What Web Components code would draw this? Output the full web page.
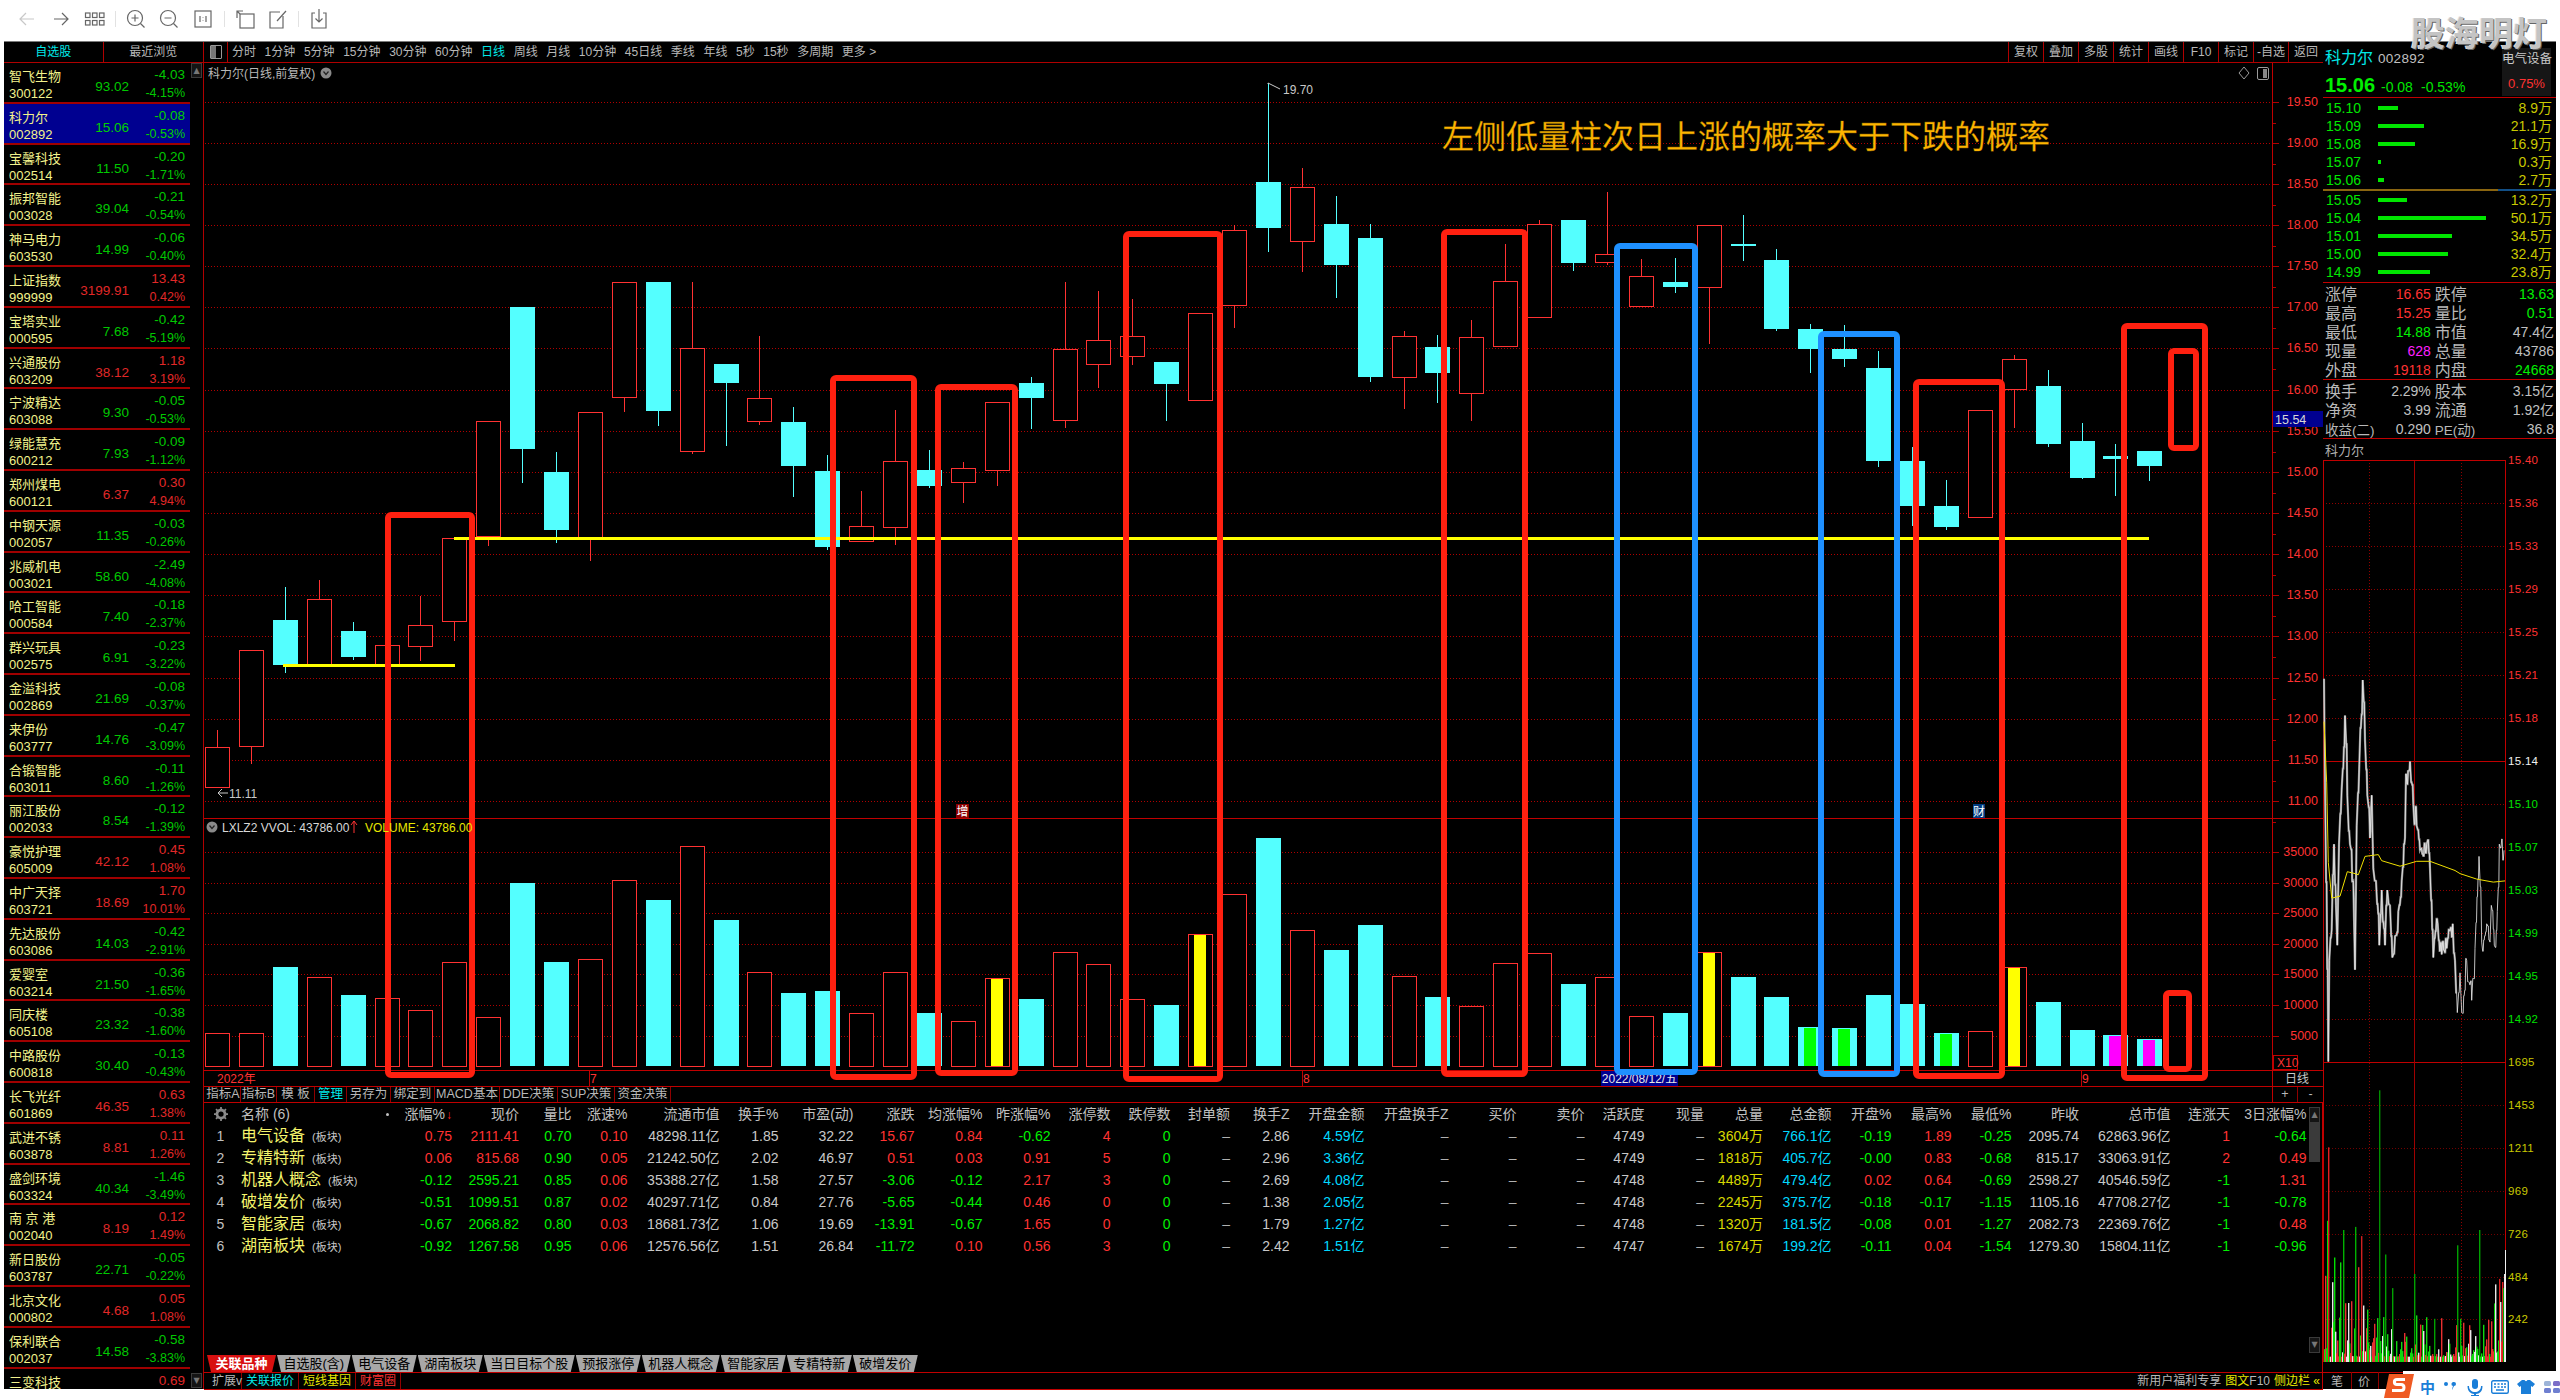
<!DOCTYPE html>
<html lang="zh">
<head>
<meta charset="utf-8">
<title>科力尔</title>
<style>
  html, body{ margin:0; padding:0; background:#fff; }
  body{
    width:2560px;
    height:1400px;
    overflow:hidden;
    position:relative;
    font-family:"Liberation Sans","Noto Sans CJK SC",sans-serif;
    font-size:13px;
  }
  #frame{
    margin:0 4px;
    height:1348px;
    display:flex;
    background:#000;
    border-top:1px solid #7a7a7a;
    box-sizing:border-box;
  }
  #center{
    width:2119px;
    display:flex;
    flex-direction:column;
    flex:none;
  }
</style>
</head>
<body>
<top-toolbar></top-toolbar>
<div id="frame">
  <quote-list></quote-list>
  <div id="center">
    <period-bar></period-bar>
    <kline-chart></kline-chart>
    <tool-tabs></tool-tabs>
    <board-table></board-table>
    <sheet-tabs></sheet-tabs>
    <status-bar></status-bar>
  </div>
  <level-panel></level-panel>
</div>
<water-mark></water-mark>
<ime-bar></ime-bar>

<script>
const RED_LINE = '#b00000';
const UP = '#ff3232';
const DOWN = '#00e600';

class TopToolbar extends HTMLElement{
  constructor(){
    super();
    const s = 'fill="none" stroke="#666" stroke-width="1.2"';
    const icon = (x, body) => `<svg style="left:${x - 11}px" width="22" height="22" viewBox="0 0 22 22" ${s}>${body}</svg>`;
    this.attachShadow({mode:'open'}).innerHTML = `
      <style>
        :host{ display:block; height:41px; position:relative; background:#fff; }
        svg{ position:absolute; top:8px; }
        i{ position:absolute; top:11px; width:1px; height:16px; background:#e2e2e2; }
      </style>
      <svg style="left:16px" width="22" height="22" viewBox="0 0 22 22" fill="none" stroke="#c8c8c8" stroke-width="1.2"><path d="M18 11H4M10 5l-6 6 6 6"/></svg>
      ${icon(61, '<path d="M4 11h14M12 5l6 6-6 6"/>')}
      ${icon(95, '<rect x="1.5" y="5" width="4.5" height="4.5"/><rect x="8.5" y="5" width="4.5" height="4.5"/><rect x="15.5" y="5" width="4.5" height="4.5"/><rect x="1.5" y="12.5" width="4.5" height="4.5"/><rect x="8.5" y="12.5" width="4.5" height="4.5"/><rect x="15.5" y="12.5" width="4.5" height="4.5"/>')}
      <i style="left:115px"></i>
      ${icon(136, '<circle cx="10" cy="10" r="7.5"/><path d="M15.5 15.5l4 4M6.5 10h7M10 6.5v7"/>')}
      ${icon(169, '<circle cx="10" cy="10" r="7.5"/><path d="M15.5 15.5l4 4M6.5 10h7"/>')}
      ${icon(203, '<rect x="3" y="3" width="16" height="16"/><path d="M8 8v6M14 8v6M11 9v.5M11 12.5v.5"/>')}
      <i style="left:224px"></i>
      ${icon(246, '<rect x="5" y="6" width="14" height="14"/><path d="M2 10V3h6M2 3l3 3"/>')}
      ${icon(278, '<path d="M16 8v12H3V4h10"/><path d="M10 13l9-10"/>')}
      <i style="left:298px"></i>
      ${icon(319, '<path d="M7 5H4v15h14V5h-3M11 1v13M7.5 10.5L11 14l3.5-3.5"/>')}
    `;
  }
}
customElements.define('top-toolbar', TopToolbar);

class WaterMark extends HTMLElement{
  constructor(){
    super();
    this.attachShadow({mode:'open'}).innerHTML = `
      <style>
        :host{
          position:absolute; left:2411px; top:10px;
          font:bold 34px/44px "Noto Sans CJK SC",sans-serif;
          color:#c4c4c4;
          text-shadow:1px 1px 0 #666, -1px 0 0 #e6e6e6;
          pointer-events:none;
          white-space:nowrap;
        }
      </style>
      股海明灯
    `;
  }
}
customElements.define('water-mark', WaterMark);

const QUOTES = [
  ['智飞生物','300122','93.02','-4.03','-4.15%'],['科力尔','002892','15.06','-0.08','-0.53%'],
  ['宝馨科技','002514','11.50','-0.20','-1.71%'],['振邦智能','003028','39.04','-0.21','-0.54%'],
  ['神马电力','603530','14.99','-0.06','-0.40%'],['上证指数','999999','3199.91','13.43','0.42%'],
  ['宝塔实业','000595','7.68','-0.42','-5.19%'],['兴通股份','603209','38.12','1.18','3.19%'],
  ['宁波精达','603088','9.30','-0.05','-0.53%'],['绿能慧充','600212','7.93','-0.09','-1.12%'],
  ['郑州煤电','600121','6.37','0.30','4.94%'],['中钢天源','002057','11.35','-0.03','-0.26%'],
  ['兆威机电','003021','58.60','-2.49','-4.08%'],['哈工智能','000584','7.40','-0.18','-2.37%'],
  ['群兴玩具','002575','6.91','-0.23','-3.22%'],['金溢科技','002869','21.69','-0.08','-0.37%'],
  ['来伊份','603777','14.76','-0.47','-3.09%'],['合锻智能','603011','8.60','-0.11','-1.26%'],
  ['丽江股份','002033','8.54','-0.12','-1.39%'],['豪悦护理','605009','42.12','0.45','1.08%'],
  ['中广天择','603721','18.69','1.70','10.01%'],['先达股份','603086','14.03','-0.42','-2.91%'],
  ['爱婴室','603214','21.50','-0.36','-1.65%'],['同庆楼','605108','23.32','-0.38','-1.60%'],
  ['中路股份','600818','30.40','-0.13','-0.43%'],['长飞光纤','601869','46.35','0.63','1.38%'],
  ['武进不锈','603878','8.81','0.11','1.26%'],['盛剑环境','603324','40.34','-1.46','-3.49%'],
  ['南 京 港','002040','8.19','0.12','1.49%'],['新日股份','603787','22.71','-0.05','-0.22%'],
  ['北京文化','000802','4.68','0.05','1.08%'],['保利联合','002037','14.58','-0.58','-3.83%'],
  ['三变科技','','','0.69','']
];

class QuoteList extends HTMLElement{
  constructor(){
    super();
    const rows = QUOTES.map((q, i) => {
      const c = q[3][0] === '-' ? 'dn' : 'up';
      return `<div class="row ${i === 1 ? 'sel' : ''} ${c}">
        <div class="name"><b>${q[0]}</b><b>${q[1]}</b></div>
        <div class="price">${q[2]}</div>
        <div class="chg"><span>${q[3]}</span><span>${q[4]}</span></div>
      </div>`;
    }).join('');
    this.attachShadow({mode:'open'}).innerHTML = `
      <style>
        :host{
          display:flex; flex-direction:column; flex:none;
          width:200px; box-sizing:border-box;
          border-right:1px solid ${RED_LINE};
          overflow:hidden;
        }
        #tabs{
          display:flex; height:21px; flex:none; box-sizing:border-box;
          border-bottom:1px solid ${RED_LINE};
          font-size:12px; line-height:20px; text-align:center; color:#b8b8b8;
        }
        #tabs div{ width:100px; }
        #tabs div:first-child{ width:99px; color:#00e8e8; border-right:1px solid ${RED_LINE}; }
        #body{ display:flex; flex:1; min-height:0; }
        #rows{ width:186px; flex:none; overflow:hidden; }
        #bar{ flex:1; display:flex; flex-direction:column; justify-content:space-between; padding-bottom:1px; }
        #bar i{ display:block; width:9px; height:13px; margin-left:1px; border:1px solid #3c3c3c; background:#141414; color:#777; font:normal 8px/13px "DejaVu Sans",sans-serif; text-align:center; }
        .row{
          display:grid; grid-template-columns:56px 64px 56px;
          height:40.8px; box-sizing:border-box;
          padding:0 5px; border-bottom:2px solid #a00000;
        }
        .row.sel{ background:#000090; border-top:0; }
        .name{ padding-top:5px; white-space:nowrap; color:#f2f28c; }
        .name b{ display:block; font-weight:normal; line-height:17px; font-size:13px; }
        .price{ text-align:right; padding-top:15px; line-height:18px; font-size:13.5px; }
        .chg{ text-align:right; padding-top:3px; white-space:nowrap; }
        .chg span{ display:block; line-height:18px; font-size:13.5px; }
        .chg span + span{ font-size:12.5px; }
        .up .price, .up .chg{ color:#e02828; }
        .dn .price, .dn .chg{ color:#00c800; }
        .sel .price, .sel .chg{ color:#00d000; }
      </style>
      <div id="tabs"><div>自选股</div><div>最近浏览</div></div>
      <div id="body">
        <div id="rows">${rows}</div>
        <div id="bar"><i>▲</i><i>▼</i></div>
      </div>
    `;
  }
}
customElements.define('quote-list', QuoteList);

class PeriodBar extends HTMLElement{
  constructor(){
    super();
    const left = ['分时','1分钟','5分钟','15分钟','30分钟','60分钟','日线','周线','月线','10分钟','45日线','季线','年线','5秒','15秒','多周期','更多 &gt;'];
    const right = ['复权','叠加','多股','统计','画线','F10','标记','-自选','返回'];
    this.attachShadow({mode:'open'}).innerHTML = `
      <style>
        :host{
          display:flex; height:21px; flex:none; box-sizing:border-box;
          border-bottom:1px solid ${RED_LINE};
          color:#b8b8b8; font-size:12px; line-height:20px; white-space:nowrap;
        }
        #book{ width:23px; flex:none; border-right:1px solid ${RED_LINE}; display:flex; align-items:center; justify-content:center; }
        #book i{ width:10px; height:12px; border:1px solid #999; background:linear-gradient(90deg,#777 45%,#000 45%); border-radius:1px; }
        #left{ display:flex; gap:8.6px; padding-left:4px; flex:1; }
        #left .on{ color:#00e8e8; }
        #right{ display:flex; }
        #right div{ width:35px; box-sizing:border-box; text-align:center; border-left:1px solid ${RED_LINE}; }
      </style>
      <div id="book"><i></i></div>
      <div id="left">${left.map(t => `<span class="${t === '日线' ? 'on' : ''}">${t}</span>`).join('')}</div>
      <div id="right">${right.map(t => `<div>${t}</div>`).join('')}</div>
    `;
  }
}
customElements.define('period-bar', PeriodBar);

// body top, body bottom, wick top, wick bottom, 1 = red hollow, 0 = cyan solid
const CANDLES = [
  [747,787,730,787,1],[650,746,650,764,1],[620,665,587,673,0],[599,665,580,665,1],[631,657,622,660,0],
  [645,665,645,665,1],[625,646,596,661,1],[538,621,538,641,1],[421,536,421,546,1],[307,449,307,483,0],
  [472,530,452,543,0],[412,537,412,561,1],[282,397,282,412,1],[282,411,282,426,0],[348,451,282,454,1],
  [364,383,364,446,0],[398,421,336,425,1],[422,466,407,497,0],[471,547,455,550,0],[526,541,491,542,1],
  [461,527,410,545,1],[470,486,450,488,0],[468,482,462,503,1],[402,470,402,486,1],[383,398,377,429,0],
  [349,420,282,428,1],[340,364,291,388,1],[336,356,299,365,1],[362,384,362,421,0],[313,400,313,400,1],
  [230,305,225,328,1],[182,228,83,252,0],[187,241,168,272,1],[224,265,196,298,0],[238,377,224,382,0],
  [336,377,331,409,1],[347,373,335,403,0],[337,393,320,421,1],[281,346,244,346,1],[224,317,220,317,1],
  [220,263,220,271,0],[254,262,192,265,1],[276,306,259,306,1],[282,287,258,293,0],[225,287,225,344,1],
  [244,246,215,261,0],[260,329,249,331,0],[329,349,324,373,0],[349,359,325,367,0],[368,461,351,467,0],
  [461,506,447,526,0],[506,527,480,530,0],[410,517,410,517,1],[359,389,355,428,1],[386,444,370,447,0],
  [441,478,423,479,0],[456,459,444,496,0],[451,466,451,481,0]
];
// bar top y, kind: r hollow, c cyan, then optional inner colour
const VOLS = [
  [1033,'r'],[1033,'r'],[967,'c'],[977,'r'],[995,'c'],[998,'r'],[1010,'r'],[962,'r'],[1017,'r'],[883,'c'],
  [962,'c'],[959,'r'],[880,'r'],[900,'c'],[846,'r'],[920,'c'],[972,'r'],[993,'c'],[991,'c'],[1013,'r'],
  [972,'r'],[1013,'c'],[1021,'r'],[978,'r','#ffff00'],[999,'c'],[952,'r'],[964,'r'],[999,'r'],[1005,'c'],[934,'r','#ffff00'],
  [894,'r'],[838,'c'],[930,'r'],[950,'c'],[925,'c'],[976,'r'],[997,'c'],[1006,'r'],[963,'r'],[953,'r'],
  [984,'c'],[977,'r'],[1016,'r'],[1013,'c'],[952,'r','#ffff00'],[977,'c'],[997,'c'],[1027,'c','#00ff00'],[1028,'c','#00ff00'],[995,'c'],
  [1004,'c'],[1033,'c','#00ff00'],[1031,'r'],[967,'r','#ffff00'],[1002,'c'],[1030,'c'],[1035,'c','#ff00ff'],[1039,'c','#ff00ff']
];
// outer box left, right, top, bottom, colour
const BOXES = [
  [385,475,512,1078,'#ff2010'],[830,917,375,1080,'#ff2010'],[935,1018,384,1076,'#ff2010'],
  [1123,1223,231,1082,'#ff2010'],[1441,1528,229,1077,'#ff2010'],[1614,1698,243,1075,'#1e90ff'],
  [1818,1900,331,1077,'#1e90ff'],[1913,2005,379,1079,'#ff2010'],[2121,2208,323,1081,'#ff2010'],
  [2168,2199,348,451,'#ff2010'],[2163,2192,990,1072,'#ff2010']
];

class KlineChart extends HTMLElement{
  constructor(){
    super();
    const CYAN = '#54ffff';
    const STEP = 33.9, W = 25, X0 = 205, BASE = 1066;
    const parts = [];
    // grid and axis
    const hline = (y, x2) => `<line x1="205" x2="${x2}" y1="${y}.5" y2="${y}.5" stroke="#b00000" stroke-width="1" stroke-dasharray="1 2"/>`;
    const priceY = p => Math.round(101.5 + (19.5 - p) * 82.3);
    for(let p = 19.5; p >= 11; p -= 0.5){
      const y = priceY(p);
      parts.push(hline(y, 2272));
      parts.push(`<line x1="2272" x2="2279" y1="${y}.5" y2="${y}.5" stroke="${RED_LINE}"/>`);
      parts.push(`<line x1="2272" x2="2276" y1="${y + 21}.5" y2="${y + 21}.5" stroke="${RED_LINE}"/>`);
      parts.push(`<text x="2318" y="${y + 4}" text-anchor="end" fill="${UP}" font-size="12.5">${p.toFixed(2)}</text>`);
    }
    [35000,30000,25000,20000,15000,10000,5000].forEach((v, i) => {
      const y = Math.round(852 + i * 30.6);
      parts.push(hline(y, 2272));
      parts.push(`<line x1="2272" x2="2279" y1="${y}.5" y2="${y}.5" stroke="${RED_LINE}"/>`);
      parts.push(`<text x="2318" y="${y + 4}" text-anchor="end" fill="${UP}" font-size="12.5">${v}</text>`);
    });
    // candles
    CANDLES.forEach((c, i) => {
      const x = Math.round(X0 + STEP * i), mid = x + 12.5;
      if(c[4]){
        if(c[2] < c[0]) parts.push(`<line x1="${mid}" x2="${mid}" y1="${c[2]}" y2="${c[0]}" stroke="${UP}"/>`);
        if(c[3] > c[1]) parts.push(`<line x1="${mid}" x2="${mid}" y1="${c[1]}" y2="${c[3]}" stroke="${UP}"/>`);
        parts.push(`<rect x="${x}.5" y="${c[0]}.5" width="${W - 1}" height="${c[1] - c[0]}" fill="#000" stroke="${UP}"/>`);
      }else{
        parts.push(`<line x1="${mid}" x2="${mid}" y1="${c[2]}" y2="${c[3]}" stroke="${CYAN}"/>`);
        parts.push(`<rect x="${x}" y="${c[0]}" width="${W}" height="${Math.max(c[1] - c[0], 2)}" fill="${CYAN}"/>`);
      }
    });
    // volume bars
    VOLS.forEach((v, i) => {
      const x = Math.round(X0 + STEP * i);
      if(v[1] === 'r'){
        parts.push(`<rect x="${x}.5" y="${v[0]}.5" width="${W - 1}" height="${BASE - v[0]}" fill="#000" stroke="${UP}"/>`);
      }else{
        parts.push(`<rect x="${x}" y="${v[0]}" width="${W}" height="${BASE - v[0]}" fill="${CYAN}"/>`);
      }
      if(v[2]) parts.push(`<rect x="${x + 6}" y="${v[0] + 1}" width="12" height="${BASE - v[0] - 1}" fill="${v[2]}"/>`);
    });
    // frame lines
    parts.push(`<line x1="204" x2="2323" y1="818.5" y2="818.5" stroke="#c00000"/>`);
    parts.push(`<line x1="204" x2="2323" y1="1070.5" y2="1070.5" stroke="#c00000"/>`);
    parts.push(`<line x1="2272.5" x2="2272.5" y1="63" y2="1086" stroke="#c00000"/>`);
    parts.push(`<rect x="2273.5" y="1055.5" width="24" height="14" fill="none" stroke="#c00000"/>`);
    parts.push(`<text x="2277" y="1067" fill="${UP}" font-size="12">X10</text>`);
    parts.push(`<text x="2297" y="1083" text-anchor="middle" fill="#c8c8c8" font-size="12">日线</text>`);
    // dates
    parts.push(`<text x="217" y="1083" fill="${UP}" font-size="12">2022年</text>`);
    [[590,'7'],[1303,'8'],[2082,'9']].forEach(d => {
      parts.push(`<line x1="${d[0] - 1}.5" x2="${d[0] - 1}.5" y1="1071" y2="1086" stroke="#c00000"/><text x="${d[0]}" y="1083" fill="${UP}" font-size="12">${d[1]}</text>`);
    });
    parts.push(`<rect x="1601" y="1071" width="77" height="15" fill="#000090"/><text x="1639.5" y="1083" text-anchor="middle" fill="#e8e8e8" font-size="12">2022/08/12/五</text>`);
    // yellow lines
    parts.push(`<line x1="454" x2="2149" y1="538.5" y2="538.5" stroke="#ffff00" stroke-width="3"/>`);
    parts.push(`<line x1="283" x2="455" y1="665.5" y2="665.5" stroke="#ffff00" stroke-width="3"/>`);
    // annotations
    BOXES.forEach(b => {
      parts.push(`<rect x="${b[0] + 3}" y="${b[2] + 3}" width="${b[1] - b[0] - 6}" height="${b[3] - b[2] - 6}" rx="3" fill="none" stroke="${b[4]}" stroke-width="6"/>`);
    });
    // labels over the plot
    parts.push(`<text x="1442" y="148" font-family="Noto Sans CJK SC" font-size="32" fill="#ffb400" stroke="#7a5a00" stroke-width="0.3">左侧低量柱次日上涨的概率大于下跌的概率</text>`);
    parts.push(`<text x="208" y="78" fill="#b8b8b8" font-size="12">科力尔(日线,前复权)</text>`);
    parts.push(`<circle cx="326" cy="73" r="5.5" fill="#8a8a8a"/><path d="M323.5 71.5l2.5 3 2.500-3" fill="none" stroke="#222" stroke-width="1.2"/>`);
    parts.push(`<path d="M2244 67l5 6-5 6-5-6z" fill="none" stroke="#9a9a9a"/><rect x="2257.5" y="67.5" width="11" height="12" rx="1.5" fill="#000" stroke="#9a9a9a"/><rect x="2263" y="69" width="4" height="9" fill="#888"/>`);
    parts.push(`<path d="M1268 84V83M1268 83l12 6" stroke="#c8c8c8" fill="none"/><text x="1283" y="94" fill="#c8c8c8" font-size="12">19.70</text>`);
    parts.push(`<path d="M228 793h-10M222 789l-4 4 4 4" stroke="#c8c8c8" fill="none"/><text x="229" y="798" fill="#c8c8c8" font-size="12">11.11</text>`);
    parts.push(`<circle cx="212" cy="827" r="5.5" fill="#8a8a8a"/><path d="M209.5 825.5l2.5 3 2.500-3" fill="none" stroke="#222" stroke-width="1.2"/>`);
    parts.push(`<text x="222" y="832" fill="#d8d8d8" font-size="12">LXLZ2 VVOL: 43786.00</text>`);
    parts.push(`<path d="M354 833v-12M351 825l3-4 3 4" stroke="${UP}" fill="none"/>`);
    parts.push(`<text x="365" y="832" fill="#e8e800" font-size="12">VOLUME: 43786.00</text>`);
    parts.push(`<rect x="956" y="804" width="13" height="14" fill="#8c0000"/><text x="956.5" y="815.5" fill="#fff" font-size="12">增</text>`);
    parts.push(`<rect x="1973" y="804" width="12" height="14" fill="#003a80"/><text x="1973" y="815.5" fill="#fff" font-size="12">财</text>`);
    parts.push(`<rect x="2273" y="411" width="50" height="16" fill="#000090"/><text x="2275" y="423.5" fill="#d8d8d8" font-size="12.5">15.54</text>`);

    this.attachShadow({mode:'open'}).innerHTML = `
      <style>
        :host{ display:block; height:1023px; flex:none; }
        svg{ display:block; font-family:"Liberation Sans","Noto Sans CJK SC",sans-serif; }
      </style>
      <svg width="2119" height="1023" viewBox="204 63 2119 1023">${parts.join('')}</svg>
    `;
  }
}
customElements.define('kline-chart', KlineChart);

class ToolTabs extends HTMLElement{
  constructor(){
    super();
    const tabs = [['指标A',35],['指标B',36],['模 板',38],['管理',32,'#00e8e8'],['另存为',44],['绑定到',44],['MACD基本',65],['DDE决策',58],['SUP决策',57],['资金决策',56]];
    this.attachShadow({mode:'open'}).innerHTML = `
      <style>
        :host{
          display:flex; height:17px; flex:none; box-sizing:border-box;
          border-top:1px solid #c00000; border-bottom:1px solid #c00000;
          color:#b8b8b8; font-size:12.5px; line-height:15px; white-space:nowrap; padding-left:2px;
        }
        div{ box-sizing:border-box; text-align:center; border-right:1px solid #900000; }
        #fill{ flex:1; border-right:1px solid #c00000; }
        .pm{ width:25px; }
        .pm:last-child{ border-right:0; }
      </style>
      ${tabs.map(t => `<div style="width:${t[1]}px;${t[2] ? 'color:' + t[2] : ''}">${t[0]}</div>`).join('')}
      <div id="fill"></div>
      <div class="pm">+</div><div class="pm">-</div>
    `;
  }
}
customElements.define('tool-tabs', ToolTabs);

const COLS = [28,168,52,67,52.5,56,92,59,75,61,68,68,60,60,59.5,59.5,75,84,68,68,60,59.5,59,68.5,60,60,60,67.6,91.4,59.5,76.5];
const HEAD = ['','名称 (6)','涨幅%','现价','量比','涨速%','流通市值','换手%','市盈(动)','涨跌','均涨幅%','昨涨幅%','涨停数','跌停数','封单额','换手Z','开盘金额','开盘换手Z','买价','卖价','活跃度','现量','总量','总金额','开盘%','最高%','最低%','昨收','总市值','连涨天','3日涨幅%'];
const BOARD = [
  ['电气设备','0.75','2111.41','0.70','0.10','48298.11','1.85','32.22','15.67','0.84','-0.62','4','2.86','4.59','4749','3604','766.1','-0.19','1.89','-0.25','2095.74','62863.96','1','-0.64'],
  ['专精特新','0.06','815.68','0.90','0.05','21242.50','2.02','46.97','0.51','0.03','0.91','5','2.96','3.36','4749','1818','405.7','-0.00','0.83','-0.68','815.17','33063.91','2','0.49'],
  ['机器人概念','-0.12','2595.21','0.85','0.06','35388.27','1.58','27.57','-3.06','-0.12','2.17','3','2.69','4.08','4748','4489','479.4','0.02','0.64','-0.69','2598.27','40546.59','-1','1.31'],
  ['破增发价','-0.51','1099.51','0.87','0.02','40297.71','0.84','27.76','-5.65','-0.44','0.46','0','1.38','2.05','4748','2245','375.7','-0.18','-0.17','-1.15','1105.16','47708.27','-1','-0.78'],
  ['智能家居','-0.67','2068.82','0.80','0.03','18681.73','1.06','19.69','-13.91','-0.67','1.65','0','1.79','1.27','4748','1320','181.5','-0.08','0.01','-1.27','2082.73','22369.76','-1','0.48'],
  ['湖南板块','-0.92','1267.58','0.95','0.06','12576.56','1.51','26.84','-11.72','0.10','0.56','3','2.42','1.51','4747','1674','199.2','-0.11','0.04','-1.54','1279.30','15804.11','-1','-0.96']
];

class BoardTable extends HTMLElement{
  constructor(){
    super();
    const sign = v => v[0] === '-' ? 'g' : 'r';
    const cell = (v, cls) => `<div class="${cls || 'w'}">${v}</div>`;
    const dash = cell('–', 'd');
    const head = HEAD.map((h, i) => {
      if(i === 0) return `<div class="gear"><svg width="14" height="14" viewBox="0 0 16 16"><circle cx="8" cy="8" r="4.6" fill="none" stroke="#8a8a8a" stroke-width="3.2"/><path d="M8 0v3M8 13v3M0 8h3M13 8h3M2.300 2.300l2 2M11.700 11.700l2 2M13.700 2.300l-2 2M4.300 11.700l-2 2" stroke="#8a8a8a" stroke-width="2"/></svg></div>`;
      if(i === 1) return `<div class="nm hd">${h}<i class="dot"></i></div>`;
      if(i === 2) return `<div>${h}<span class="arrow">↓</span></div>`;
      return `<div>${h}</div>`;
    }).join('');
    const rows = BOARD.map((r, n) => [
      `<div class="no">${n + 1}</div>`,
      `<div class="nm"><b>${r[0]}</b><small>(板块)</small></div>`,
      cell(r[1], sign(r[1])), cell(r[2], sign(r[1])), cell(r[3], 'g'), cell(r[4], 'r'),
      `<div class="w">${r[5]}亿</div>`, cell(r[6]), cell(r[7]),
      cell(r[8], sign(r[8])), cell(r[9], sign(r[9])), cell(r[10], sign(r[10])),
      cell(r[11], 'r'), cell('0', 'g'), dash, cell(r[12]),
      `<div class="c">${r[13]}亿</div>`, dash, dash, dash, cell(r[14]), dash,
      `<div class="y">${r[15]}万</div>`, `<div class="c">${r[16]}亿</div>`,
      cell(r[17], sign(r[17])), cell(r[18], sign(r[18])), cell(r[19], sign(r[19])),
      cell(r[20]), `<div class="w">${r[21]}亿</div>`, cell(r[22], sign(r[22])), cell(r[23], sign(r[23]))
    ].join('')).join('');
    this.attachShadow({mode:'open'}).innerHTML = `
      <style>
        :host{ display:flex; height:252px; flex:none; border-right:1px solid #c00000; box-sizing:border-box; }
        #grid{
          display:grid; width:2102px; flex:none; align-content:start;
          grid-template-columns:${COLS.map(c => c + 'px').join(' ')};
          grid-auto-rows:22px; padding-top:0;
          font-size:14px; line-height:22px; text-align:right; white-space:nowrap; color:#c0c0c0;
        }
        .gear{ display:flex; align-items:center; justify-content:center; padding-left:6px; }
        .no{ text-align:center; padding-left:5px; }
        .nm{ text-align:left; padding-left:9px; position:relative; }
        .nm b{ font-weight:normal; font-size:16px; color:#f4f46c; }
        .nm small{ font-size:11px; margin-left:7px; color:#c8c8c8; }
        .dot{ position:absolute; left:154px; top:10px; width:3px; height:3px; border-radius:50%; background:#c0c0c0; }
        .arrow{ color:#ff2020; font-size:12px; margin-left:1px; }
        .w{ color:#c8c8c8; } .r{ color:${UP}; } .g{ color:#00f000; }
        .c{ color:#00d8ff; } .y{ color:#d8d800; } .d{ color:#b0b0b0; }
        #sb{ flex:1; display:flex; flex-direction:column; padding:4px 2px 2px 3px; }
        #sb i{ display:block; height:14px; background:#141414; border:1px solid #3a3a3a; color:#777; font:normal 8px/14px "DejaVu Sans",sans-serif; text-align:center; }
        #sb u{ display:block; height:39px; background:#3a3a3a; }
        #sb b{ flex:1; }
      </style>
      <div id="grid">${head}${rows}</div>
      <div id="sb"><i>▲</i><u></u><b></b><i>▼</i></div>
    `;
  }
}
customElements.define('board-table', BoardTable);

class SheetTabs extends HTMLElement{
  constructor(){
    super();
    const tabs = ['自选股(含)','电气设备','湖南板块','当日目标个股','预报涨停','机器人概念','智能家居','专精特新','破增发价'];
    this.attachShadow({mode:'open'}).innerHTML = `
      <style>
        :host{ display:flex; height:17px; flex:none; padding-left:3px; font-size:13px; line-height:17px; white-space:nowrap; border-right:1px solid #c00000; box-sizing:border-box; }
        div{
          padding:0 6.5px; color:#000; background:#a8a8a8; margin-right:1px;
          clip-path:polygon(0 0,100% 0,calc(100% - 4px) 100%,4px 100%);
        }
        .on{ background:#d81010; color:#fff; font-weight:bold; padding:0 8.5px; }
      </style>
      <div class="on">关联品种</div>
      ${tabs.map(t => `<div>${t}</div>`).join('')}
    `;
  }
}
customElements.define('sheet-tabs', SheetTabs);

class StatusBar extends HTMLElement{
  constructor(){
    super();
    this.attachShadow({mode:'open'}).innerHTML = `
      <style>
        :host{
          display:flex; height:18px; flex:none; box-sizing:border-box;
          border-top:1px solid #c00000; border-bottom:1px solid #c00000; border-right:1px solid #c00000;
          font-size:12px; line-height:16px; color:#b8b8b8; white-space:nowrap; padding-left:4px;
        }
        div{ padding:0 4px; border-right:1px solid #900000; }
        .fill{ flex:1; border:0; }
        .r{ display:flex; gap:4px; padding:0 2px 0 0; border:0; }
        .r span{ display:block; }
      </style>
      <div style="width:34px;box-sizing:border-box">扩展v</div>
      <div style="color:#00e8e8">关联报价</div>
      <div style="color:#e8e800">短线基因</div>
      <div style="color:${UP}">财富圈</div>
      <div class="fill"></div>
      <div class="r"><span>新用户福利专享</span><span><b style="color:#e8e800;font-weight:normal">图文</b>F10</span><span style="color:#e8e800">侧边栏 «</span></div>
    `;
  }
}
customElements.define('status-bar', StatusBar);

class LevelPanel extends HTMLElement{
  constructor(){
    super();
    const lv = (p, w, v) => `<div class="lv"><span class="p">${p}</span><span class="b"><i style="width:${w}px"></i></span><span class="v">${v}</span></div>`;
    const st = (a, b, bc, c, d, dc) => `<div class="st"><span class="k">${a}</span><span class="n" style="color:${bc}">${b}</span><span class="k k2">${c}</span><span class="n" style="color:${dc}">${d}</span></div>`;
    const W = '#c0c0c0';
    this.attachShadow({mode:'open'}).innerHTML = `
      <style>
        :host{ display:flex; flex-direction:column; width:233px; flex:none; overflow:hidden; white-space:nowrap; }
        #head{ height:56px; box-sizing:border-box; border-bottom:1px solid #c00000; position:relative; display:flex; flex-direction:column; padding-left:2px; }
        #l1{ display:flex; align-items:baseline; height:32px; line-height:32px; }
        #l1 b{ font-weight:normal; font-size:16px; color:#00e8e8; width:53px; }
        #l1 span{ font-size:13.5px; color:#c0c0c0; letter-spacing:.3px; }
        #l2{ display:flex; align-items:baseline; line-height:22px; color:${DOWN}; font-size:14px; }
        #l2 b{ font-size:20px; width:56px; color:#00f000; }
        #l2 span{ width:40px; }
        #tag{ position:absolute; left:179px; top:6px; width:49px; height:48px; background:#161616; text-align:center; color:#c8c8c8; font-size:12.5px; line-height:22px; }
        #tag em{ display:block; font-style:normal; color:#ff3232; font-size:13px; margin-top:3px; }
        .lv{ display:flex; height:18px; line-height:18px; padding-left:3px; padding-right:4px; }
        .p{ width:52px; color:#00e600; font-size:14px; }
        .b{ flex:1; display:flex; align-items:center; }
        .b i{ display:block; height:4px; background:#00e600; }
        .v{ color:#c8c800; font-size:14px; }
        #asks{ height:91px; box-sizing:border-box; padding-top:1px; }
        #mid{ height:2px; background:linear-gradient(90deg,#8a6510 175px,#124f86 175px); }
        #bids{ height:92px; box-sizing:border-box; border-bottom:1px solid #c00000; }
        .st{ display:flex; height:19px; line-height:19px; padding:0 2px; }
        .k{ font-size:16px; color:#b8b8b8; width:48px; flex:none; }
        .k.sm{ font-size:13.5px; }
        .k2{ margin-left:4px; }
        .n{ font-size:14px; width:65px; text-align:right; }
        .st .n:last-child{ width:80px; margin-left:auto; }
        #s1{ height:97px; box-sizing:border-box; padding-top:2px; border-bottom:1px solid #c00000; }
        #s2{ height:59px; box-sizing:border-box; padding-top:2px; border-bottom:1px solid #c00000; }
      </style>
      <div id="head">
        <div id="l1"><b>科力尔</b><span>002892</span></div>
        <div id="l2"><b>15.06</b><span>-0.08</span><span>-0.53%</span></div>
        <div id="tag">电气设备<em>0.75%</em></div>
      </div>
      <div id="asks">
        ${lv('15.10',20,'8.9万')}${lv('15.09',46,'21.1万')}${lv('15.08',37,'16.9万')}${lv('15.07',3,'0.3万')}${lv('15.06',5.5,'2.7万')}
      </div>
      <div id="mid"></div>
      <div id="bids">
        ${lv('15.05',29,'13.2万')}${lv('15.04',108,'50.1万')}${lv('15.01',74,'34.5万')}${lv('15.00',70,'32.4万')}${lv('14.99',52,'23.8万')}
      </div>
      <div id="s1">
        ${st('涨停','16.65',UP,'跌停','13.63','#00f000')}
        ${st('最高','15.25',UP,'量比','0.51','#00f000')}
        ${st('最低','14.88','#00f000','市值','47.4亿',W)}
        ${st('现量','628','#ff20ff','总量','43786',W)}
        ${st('外盘','19118',UP,'内盘','24668','#00f000')}
      </div>
      <div id="s2">
        ${st('换手','2.29%',W,'股本','3.15亿',W)}
        ${st('净资','3.99',W,'流通','1.92亿',W)}
        ${st('<span class="k sm">收益(二)</span>','0.290',W,'<span class="k sm">PE(动)</span>','36.8',W)}
      </div>
      <mini-chart></mini-chart>
    `;
  }
}

class MiniChart extends HTMLElement{
  constructor(){
    super();
    let seed = 17;
    const rnd = () => { seed = (seed * 1103515245 + 12345) & 0x7fffffff; return seed / 0x7fffffff; };
    // points read off the reference in crop units: x = 2260 + cx / 3, y = 440 + cy / 1.633
    const tx = p => [2260 + p[0] / 3, 440 + p[1] / 1.633];
    const knots = [[192,390],[195,560],[205,1015],[208,850],[215,800],[222,660],[228,760],[232,825],[237,660],[245,570],[255,450],[262,580],[270,660],[280,720],[285,865],[290,630],[298,530],[308,392],[315,490],[322,580],[330,650],[335,580],[340,700],[348,720],[358,825],[365,735],[375,825],[382,735],[390,760],[397,845],[405,810],[415,770],[425,720],[435,650],[438,545],[450,525],[460,595],[470,630],[480,670],[500,660],[510,700],[520,845],[533,790],[545,840],[560,830],[578,790],[585,850],[592,935],[600,870],[605,935],[620,850],[635,915],[645,830],[657,680],[665,820],[680,790],[690,820],[694,760],[703,825],[712,770],[718,660],[732,670]];
    // stepped zigzag between the knots, the way the tick line looks
    const line = [];
    knots.forEach((k, i) => {
      line.push(k);
      const n = knots[i + 1];
      if(!n) return;
      const steps = Math.floor((n[0] - k[0]) / 3);
      for(let j = 1; j < steps; j++){
        const t = j / steps;
        const y = k[1] + (n[1] - k[1]) * t + (rnd() - 0.5) * 44;
        const x = k[0] + (n[0] - k[0]) * t;
        line.push([x, y], [x + 1.5, y]);
      }
    });
    const fmt = list => list.map(p => tx(p).map(v => v.toFixed(1)).join(',')).join(' ');
    const pts = fmt(line);
    const ptsLeft = fmt(line.filter(p => p[0] < 590));
    const avg = fmt([[192,460],[200,560],[205,690],[215,748],[240,745],[262,705],[285,708],[295,710],[315,680],[355,677],[365,687],[420,696],[470,688],[510,688],[585,703],[600,708],[650,717],[700,722],[735,720]]);

    const g = [];
    const labels = ['15.40','15.36','15.33','15.29','15.25','15.21','15.18','15.14','15.10','15.07','15.03','14.99','14.95','14.92'];
    labels.forEach((t, i) => {
      const y = Math.round(460 + i * 42.97);
      const col = i < 7 ? UP : i === 7 ? '#f0f0f0' : '#00e000';
      if(i) g.push(`<line x1="2323" x2="2505" y1="${y}.5" y2="${y}.5" stroke="${i === 7 ? '#c00000' : '#900000'}" ${i === 7 ? '' : 'stroke-dasharray="1 2"'}/>`);
      g.push(`<text x="2508" y="${y + 4}" fill="${col}" font-size="11.5" letter-spacing=".3">${t}</text>`);
    });
    ['1695','1453','1211','969','726','484','242'].forEach((t, i) => {
      const y = Math.round(1062 + i * 42.9);
      g.push(`<line x1="2323" x2="2505" y1="${y}.5" y2="${y}.5" stroke="${i ? '#700000' : '#c00000'}" ${i ? 'stroke-dasharray="1 2"' : ''}/>`);
      g.push(`<text x="2508" y="${y + 4}" fill="#c8c800" font-size="11.5" letter-spacing=".3">${t}</text>`);
    });
    [2369, 2461].forEach(x => g.push(`<line x1="${x}.5" x2="${x}.5" y1="460" y2="1362" stroke="#900000" stroke-dasharray="1 2"/>`));
    g.push(`<line x1="2414.5" x2="2414.5" y1="460" y2="1362" stroke="#a00000"/>`);

    // volume spikes read off the reference, the rest are low noise bars
    const spikes = {200:[1275,'#00e000'],205:[1155,'#e02020'],222:[1335,'#00e000'],248:[1290,'#00b000'],285:[1285,'#00b000'],303:[1300,'#d02020'],357:[1062,'#009000'],375:[1330,'#00a000'],395:[1385,'#00a000'],463:[1362,'#00a000'],522:[1435,'#00a000'],590:[1315,'#00a000'],600:[1435,'#00c000'],658:[1290,'#00a000'],703:[1410,'#00d000'],718:[1370,'#e02020'],725:[1375,'#e02020'],730:[1385,'#00b000']};
    const bars = [];
    for(let cx = 192; cx <= 733; cx += 3){
      const near = Object.keys(spikes).find(k => Math.abs(k - cx) < 2);
      let top, col;
      const left = cx < 330 ? 1 : cx > 690 ? 0.8 : 0.4;
      if(near){
        top = spikes[near][0]; col = spikes[near][1];
      }else{
        const r = rnd();
        top = 1505 - (8 + Math.pow(rnd(), 3) * 170 * left);
        col = r < 0.4 ? '#e83030' : r < 0.78 ? '#10d810' : '#e8e8e8';
      }
      const xy = tx([cx, top]);
      bars.push(`<rect x="${xy[0].toFixed(1)}" y="${xy[1].toFixed(1)}" width="1.4" height="${(1362 - xy[1]).toFixed(1)}" fill="${col}"/>`);
    }

    this.attachShadow({mode:'open'}).innerHTML = `
      <style>
        :host{ display:block; flex:1; min-height:0; position:relative; }
        svg{ display:block; font-family:"Liberation Sans","Noto Sans CJK SC",sans-serif; }
      </style>
      <svg width="233" height="951" viewBox="2323 439 233 951">
        <text x="2325" y="455" fill="#b0b0b0" font-size="13">科力尔</text>
        ${g.join('')}
        <rect x="2323.5" y="460.5" width="182" height="901" fill="none" stroke="#c00000"/>
        <polyline points="${ptsLeft}" fill="none" stroke="#8c8c8c" stroke-width="2.2"/>
        <polyline points="${pts}" fill="none" stroke="#f0f0f0" stroke-width="0.8"/>
        <polyline points="${avg}" fill="none" stroke="#f0e000" stroke-width="1"/>
        ${bars.join('')}
        <line x1="2505.5" x2="2505.5" y1="1250" y2="1362" stroke="#f0f0f0"/>
        <line x1="2323" x2="2556" y1="1372.5" y2="1372.5" stroke="#c00000"/>
        <line x1="2351.5" x2="2351.5" y1="1372" y2="1390" stroke="#900000"/>
        <line x1="2378.5" x2="2378.5" y1="1372" y2="1390" stroke="#900000"/>
        <text x="2337" y="1386" text-anchor="middle" fill="#b8b8b8" font-size="12">笔</text>
        <text x="2364" y="1386" text-anchor="middle" fill="#b8b8b8" font-size="12">价</text>
      </svg>
    `;
  }
}
customElements.define('mini-chart', MiniChart);
customElements.define('level-panel', LevelPanel);

class ImeBar extends HTMLElement{
  constructor(){
    super();
    this.attachShadow({mode:'open'}).innerHTML = `
      <style>
        :host{
          position:absolute; left:2383px; top:1371px; width:177px; height:29px;
          display:flex; align-items:center;
          background:linear-gradient(90deg,transparent 20px,#fff 20px);
          color:#1a7ed8; font:bold 15px "Noto Sans CJK SC",sans-serif;
        }
        svg{ display:block; flex:none; }
        #row{ display:flex; align-items:center; gap:8px; margin-left:5px; padding-top:2px; }
      </style>
      <svg width="32" height="29" viewBox="0 0 32 29">
        <path d="M6 3h25l-5 24H1z" fill="#ef5a23"/>
        <path d="M22 8.5h-8c-3.5 0-3.5 5 0 5h4c4 0 4 6 0 6H9" fill="none" stroke="#fff" stroke-width="3"/>
      </svg>
      <div id="row">
        <span>中</span>
        <svg width="16" height="16" viewBox="0 0 16 16" fill="#1a7ed8"><circle cx="3" cy="5" r="2"/><path d="M11 3a2 2 0 1 1 0 4l-2 4c0-2 .8-3 1-4a2 2 0 0 1 1-4z"/></svg>
        <svg width="16" height="18" viewBox="0 0 16 18" fill="#1a7ed8"><rect x="5" y="1" width="6" height="10" rx="3"/><path d="M2 8c0 8 12 8 12 0h1.500c0 6-3 7.500-6.500 8v1.500h-2V16C4 15.500.5 14 .5 8zM4 17h8v1H4z"/></svg>
        <svg width="18" height="14" viewBox="0 0 18 14"><rect x=".7" y=".7" width="16.600" height="12.600" rx="1.500" fill="none" stroke="#1a7ed8" stroke-width="1.400"/><path d="M3 4h2M6.500 4h2M10 4h2M13 4h2M3 7h2M6.500 7h2M10 7h2M13 7h2M5 10h8" stroke="#1a7ed8" stroke-width="1.500"/></svg>
        <svg width="18" height="16" viewBox="0 0 18 16" fill="#1a7ed8"><path d="M5 1h2.500c.5 1.500 2.500 1.500 3 0H13l5 4-2.500 3-1.500-1v8H4V7L2.500 8 0 5z"/></svg>
        <svg width="18" height="14" viewBox="0 0 18 14"><rect x="1" y="1" width="7" height="5" rx="1.500" fill="#9db4d8"/><rect x="10" y="1" width="7" height="5" rx="1.500" fill="#7d6fc8"/><rect x="1" y="8" width="7" height="5" rx="1.500" fill="#6f7fd0"/><rect x="10" y="8" width="7" height="5" rx="1.500" fill="#6f7fd0"/></svg>
      </div>
    `;
  }
}
customElements.define('ime-bar', ImeBar);
</script>
</body>
</html>
